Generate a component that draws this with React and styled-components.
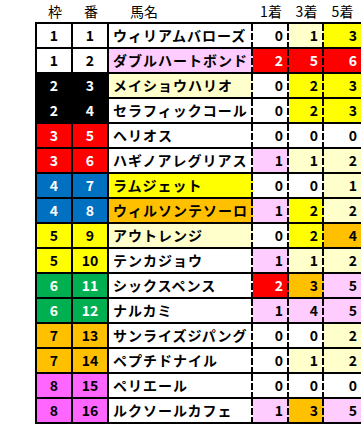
import React from "react";
import styled, { createGlobalStyle } from "styled-components";

const GlobalStyle = createGlobalStyle`
  html, body {
    margin: 0;
    padding: 0;
    background: #fff;
    overflow: hidden;
  }
  body {
    font-family: "Noto Sans CJK JP", "Noto Sans", sans-serif;
    color: #000;
  }
`;

const C = {
  white: "#ffffff",
  black: "#000000",
  red: "#ff0000",
  blue: "#0070c0",
  yellow: "#ffff00",
  green: "#00b050",
  orange: "#ffc000",
  magenta: "#ff66ff",
  pink: "#ffccff",
  cream: "#ffffcc",
};

const frameColors = {
  1: [C.white, "#000"],
  2: [C.black, "#fff"],
  3: [C.red, "#fff"],
  4: [C.blue, "#fff"],
  5: [C.yellow, "#000"],
  6: [C.green, "#fff"],
  7: [C.orange, "#000"],
  8: [C.magenta, "#000"],
};

// [枠, 番, 馬名, 名前背景, [1着, 背景], [3着, 背景], [5着, 背景]]
const rows = [
  [1, 1, "ウィリアムバローズ", C.white, [0, C.white], [1, C.cream], [3, C.yellow]],
  [1, 2, "ダブルハートボンド", C.pink, [2, C.red], [5, C.red], [6, C.red]],
  [2, 3, "メイショウハリオ", C.cream, [0, C.white], [2, C.yellow], [3, C.yellow]],
  [2, 4, "セラフィックコール", C.white, [0, C.white], [2, C.yellow], [3, C.yellow]],
  [3, 5, "ヘリオス", C.white, [0, C.white], [0, C.white], [0, C.white]],
  [3, 6, "ハギノアレグリアス", C.white, [1, C.pink], [1, C.cream], [2, C.cream]],
  [4, 7, "ラムジェット", C.yellow, [0, C.white], [0, C.white], [1, C.cream]],
  [4, 8, "ウィルソンテソーロ", C.orange, [1, C.pink], [2, C.yellow], [2, C.cream]],
  [5, 9, "アウトレンジ", C.cream, [0, C.white], [2, C.yellow], [4, C.orange]],
  [5, 10, "テンカジョウ", C.white, [1, C.pink], [1, C.cream], [2, C.cream]],
  [6, 11, "シックスペンス", C.white, [2, C.red], [3, C.orange], [5, C.pink]],
  [6, 12, "ナルカミ", C.white, [1, C.pink], [4, C.pink], [5, C.pink]],
  [7, 13, "サンライズジパング", C.white, [0, C.white], [0, C.white], [2, C.cream]],
  [7, 14, "ペプチドナイル", C.white, [0, C.white], [1, C.cream], [2, C.cream]],
  [8, 15, "ペリエール", C.white, [0, C.white], [0, C.white], [0, C.white]],
  [8, 16, "ルクソールカフェ", C.white, [1, C.pink], [3, C.orange], [5, C.pink]],
];

const Page = styled.div`
  width: 361px;
  padding-left: 35px;
  box-sizing: border-box;
  overflow: hidden;
`;

const columns = "36px 36px 144px 36px 35px 39px";

const HeaderRow = styled.div`
  display: grid;
  grid-template-columns: 2px ${columns};
  height: 22px;
  align-items: center;
  font-size: 14px;
  line-height: 22px;
`;

const HeadCell = styled.div`
  text-align: ${(p) => (p.$left ? "left" : "center")};
  padding-left: ${(p) => (p.$left ? "21px" : "0")};
  padding-right: ${(p) => (p.$pr ? p.$pr : "0")};
  white-space: nowrap;
`;

const Table = styled.div`
  width: 364px;
  border-top: 2px solid #000;
  border-left: 2px solid #000;
`;

const Row = styled.div`
  display: grid;
  grid-template-columns: ${columns};
  height: 25px;
  box-sizing: border-box;
  border-bottom: 2px solid #000;
  font-size: 14px;
  font-weight: 700;
  line-height: 23px;
`;

const IdCell = styled.div`
  background: ${(p) => p.$bg};
  color: ${(p) => p.$fg};
  border-right: 2px solid #000;
  text-align: center;
`;

const NameCell = styled.div`
  background-color: ${(p) => p.$bg};
  background-image: repeating-linear-gradient(
    to bottom,
    #000 0 7px,
    transparent 7px 9px
  );
  background-size: 2px 100%;
  background-position: right top;
  background-repeat: no-repeat;
  padding-left: 4px;
  letter-spacing: 1px;
  white-space: nowrap;
  overflow: hidden;
`;

const CountCell = styled.div`
  background-color: ${(p) => p.$bg};
  color: ${(p) => (p.$bg === C.red ? "#fff" : "#000")};
  background-image: repeating-linear-gradient(
    to bottom,
    #000 0 7px,
    transparent 7px 9px
  );
  background-size: 2px 100%;
  background-position: right top;
  background-repeat: no-repeat;
  text-align: right;
  padding-right: 6px;
`;

export default function App() {
  return (
    <Page>
      <GlobalStyle />
      <HeaderRow>
        <div />
        <HeadCell>枠</HeadCell>
        <HeadCell>番</HeadCell>
        <HeadCell $left>馬名</HeadCell>
        <HeadCell>1着</HeadCell>
        <HeadCell>3着</HeadCell>
        <HeadCell $pr="2px">5着</HeadCell>
      </HeaderRow>
      <Table>
        {rows.map(([waku, ban, name, nameBg, r1, r3, r5]) => {
          const [bg, fg] = frameColors[waku];
          return (
            <Row key={ban}>
              <IdCell $bg={bg} $fg={fg}>
                {waku}
              </IdCell>
              <IdCell $bg={bg} $fg={fg}>
                {ban}
              </IdCell>
              <NameCell $bg={nameBg}>{name}</NameCell>
              <CountCell $bg={r1[1]}>{r1[0]}</CountCell>
              <CountCell $bg={r3[1]}>{r3[0]}</CountCell>
              <CountCell $bg={r5[1]}>{r5[0]}</CountCell>
            </Row>
          );
        })}
      </Table>
    </Page>
  );
}
